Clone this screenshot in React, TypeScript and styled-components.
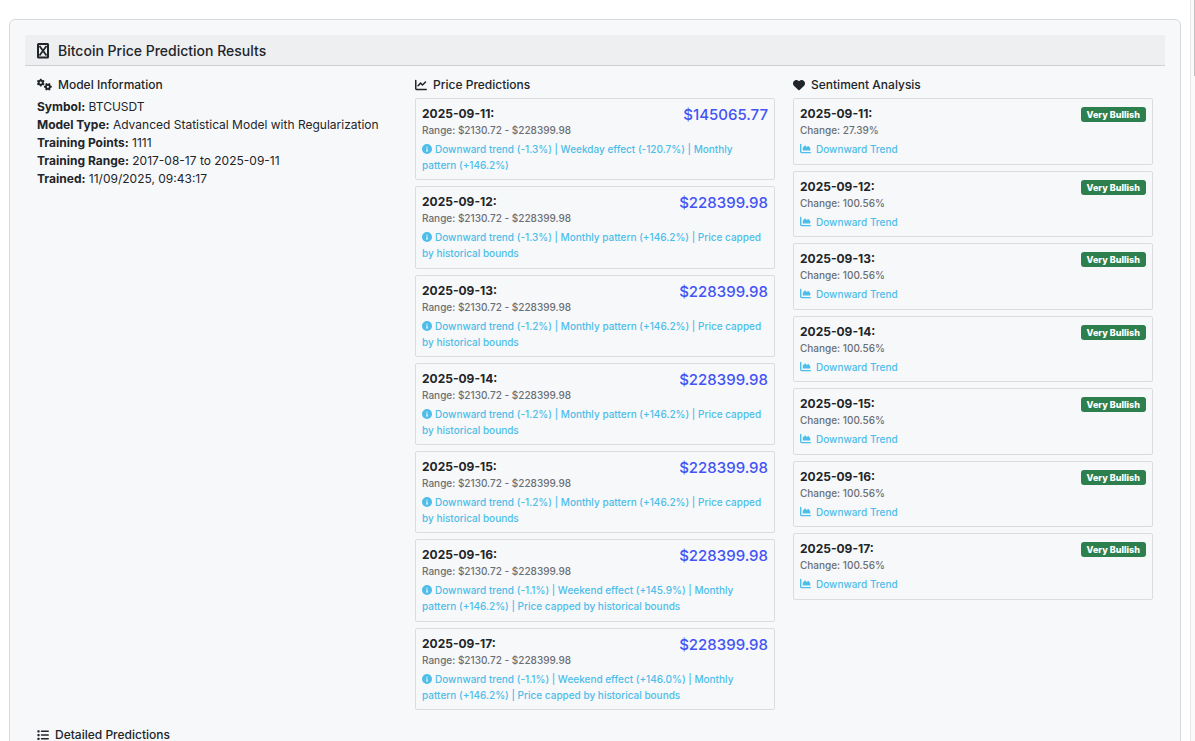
import React from "react";
import styled, { createGlobalStyle } from "styled-components";
import {
  FaGears,
  FaChartLine,
  FaHeart,
  FaCircleInfo,
  FaChartArea,
  FaList,
} from "react-icons/fa6";

const GlobalStyle = createGlobalStyle`
  *, *::before, *::after { box-sizing: border-box; }
  html { scrollbar-width: none; }
  html::-webkit-scrollbar { display: none; }
  body {
    margin: 0;
    height: 100vh;
    overflow: hidden;
    background: #ffffff;
    color: #212529;
    font-family: Inter, "Liberation Sans", sans-serif;
    font-size: 12px;
    line-height: 18px;
  }
`;

const Page = styled.div`
  display: flex;
  height: 100vh;
  overflow: hidden;
`;

const Content = styled.main`
  flex: 1;
  min-width: 0;
  padding: 19px 9px 0;
`;

const ScrollTrack = styled.div`
  flex: none;
  width: 5px;
  display: flex;
  justify-content: flex-end;
  background: #fafafa;
  border-left: 1px solid #e8e8e8;
`;

const ScrollThumb = styled.div`
  width: 1px;
  height: 76px;
  background: #c1c1c1;
`;

const Panel = styled.section`
  padding: 15px 15px 24px;
  background: #f7f8fa;
  border: 1px solid #d8d9db;
  border-radius: 6px;
`;

const PanelHeader = styled.header`
  display: flex;
  align-items: center;
  gap: 9px;
  height: 31px;
  padding: 1px 12px 0;
  background: #eeeff1;
  border-bottom: 1px solid #cfd0d3;
  border-radius: 2px 2px 0 0;
`;

const PanelTitle = styled.h1`
  margin: 0;
  font-size: 14px;
  font-weight: 500;
  line-height: 18px;
`;

const Columns = styled.div`
  display: grid;
  grid-template-columns: repeat(3, minmax(0, 1fr));
  gap: 18px;
  padding: 10px 12px 0;
`;

const Column = styled.section`
  min-width: 0;
`;

const SectionTitle = styled.h2`
  display: flex;
  align-items: center;
  gap: 6px;
  margin: 0 0 4px;
  font-size: 12px;
  font-weight: 500;
  line-height: 18px;

  svg {
    margin-bottom: 1px;
  }
`;

const Facts = styled.dl`
  margin: 0;
`;

const Fact = styled.div`
  dt,
  dd {
    display: inline;
    margin: 0;
  }
  dt {
    font-weight: 700;
  }
`;

const CardList = styled.ul<{ $height: number }>`
  display: flex;
  flex-direction: column;
  gap: 6px;
  min-height: ${(p) => p.$height}px;
  margin: 0;
  padding: 0;
  list-style: none;
`;

const Card = styled.li`
  flex: 1;
  padding: 6px;
  border: 1px solid #dadce0;
  border-radius: 2px;
`;

const CardTop = styled.div`
  display: flex;
  justify-content: space-between;
  align-items: flex-start;
`;

const CardDate = styled.strong`
  display: block;
  font-size: 12px;
  font-weight: 700;
  line-height: 17px;
`;

const Muted = styled.div`
  color: #6a6f75;
  font-size: 10px;
  font-weight: 500;
  line-height: 16px;
`;

const Price = styled.span`
  color: #4353f4;
  font-size: 15px;
  font-weight: 500;
  line-height: 20px;
`;

const Note = styled.p`
  margin: 3px 0 0;
  padding-right: 3px;
  color: #4dbde9;
  font-size: 10px;
  font-weight: 500;
  line-height: 16px;

  svg {
    vertical-align: -1px;
    margin-right: 3px;
  }
`;

const Trend = styled(Note)`
  svg {
    margin-right: 5px;
  }
`;

const Badge = styled.span`
  margin-top: 2px;
  padding: 0 6px;
  color: #ffffff;
  background: #2d804e;
  border-radius: 3px;
  font-size: 9px;
  font-weight: 800;
  line-height: 15px;
`;

const Details = styled.section`
  padding: 16px 12px 0;
`;

const range = "Range: $2130.72 - $228399.98";

const facts = [
  ["Symbol:", "BTCUSDT"],
  ["Model Type:", "Advanced Statistical Model with Regularization"],
  ["Training Points:", "1111"],
  ["Training Range:", "2017-08-17 to 2025-09-11"],
  ["Trained:", "11/09/2025, 09:43:17"],
];

const predictions = [
  { date: "2025-09-11", price: "$145065.77", note: "Downward trend (-1.3%) | Weekday effect (-120.7%) | Monthly pattern (+146.2%)", change: "27.39%" },
  { date: "2025-09-12", price: "$228399.98", note: "Downward trend (-1.3%) | Monthly pattern (+146.2%) | Price capped by historical bounds", change: "100.56%" },
  { date: "2025-09-13", price: "$228399.98", note: "Downward trend (-1.2%) | Monthly pattern (+146.2%) | Price capped by historical bounds", change: "100.56%" },
  { date: "2025-09-14", price: "$228399.98", note: "Downward trend (-1.2%) | Monthly pattern (+146.2%) | Price capped by historical bounds", change: "100.56%" },
  { date: "2025-09-15", price: "$228399.98", note: "Downward trend (-1.2%) | Monthly pattern (+146.2%) | Price capped by historical bounds", change: "100.56%" },
  { date: "2025-09-16", price: "$228399.98", note: "Downward trend (-1.1%) | Weekend effect (+145.9%) | Monthly pattern (+146.2%) | Price capped by historical bounds", change: "100.56%" },
  { date: "2025-09-17", price: "$228399.98", note: "Downward trend (-1.1%) | Weekend effect (+146.0%) | Monthly pattern (+146.2%) | Price capped by historical bounds", change: "100.56%" },
];

const MissingGlyph = () => (
  <svg width="12" height="16" viewBox="0 0 12 16" fill="none" stroke="#212529" aria-hidden="true">
    <rect x="1" y="1" width="10" height="13.5" rx="0.5" strokeWidth="2" />
    <path d="M2.5 3 9.5 12.5M9.5 3 2.5 12.5" strokeWidth="1.8" />
  </svg>
);

export default function App() {
  return (
    <>
      <GlobalStyle />
      <Page>
        <Content>
          <Panel>
            <PanelHeader>
              <MissingGlyph />
              <PanelTitle>Bitcoin Price Prediction Results</PanelTitle>
            </PanelHeader>
            <Columns>
              <Column>
                <SectionTitle>
                  <FaGears size={15} />
                  Model Information
                </SectionTitle>
                <Facts>
                  {facts.map(([label, value]) => (
                    <Fact key={label}>
                      <dt>{label}</dt> <dd>{value}</dd>
                    </Fact>
                  ))}
                </Facts>
              </Column>
              <Column>
                <SectionTitle>
                  <FaChartLine size={12} />
                  Price Predictions
                </SectionTitle>
                <CardList $height={612}>
                  {predictions.map((p) => (
                    <Card key={p.date}>
                      <CardTop>
                        <div>
                          <CardDate>{p.date}:</CardDate>
                          <Muted>{range}</Muted>
                        </div>
                        <Price>{p.price}</Price>
                      </CardTop>
                      <Note>
                        <FaCircleInfo size={10} />
                        {p.note}
                      </Note>
                    </Card>
                  ))}
                </CardList>
              </Column>
              <Column>
                <SectionTitle>
                  <FaHeart size={12} />
                  Sentiment Analysis
                </SectionTitle>
                <CardList $height={502}>
                  {predictions.map((p) => (
                    <Card key={p.date}>
                      <CardTop>
                        <div>
                          <CardDate>{p.date}:</CardDate>
                          <Muted>Change: {p.change}</Muted>
                        </div>
                        <Badge>Very Bullish</Badge>
                      </CardTop>
                      <Trend>
                        <FaChartArea size={11} />
                        Downward Trend
                      </Trend>
                    </Card>
                  ))}
                </CardList>
              </Column>
            </Columns>
            <Details>
              <SectionTitle>
                <FaList size={12} />
                Detailed Predictions
              </SectionTitle>
            </Details>
          </Panel>
        </Content>
        <ScrollTrack>
          <ScrollThumb />
        </ScrollTrack>
      </Page>
    </>
  );
}
